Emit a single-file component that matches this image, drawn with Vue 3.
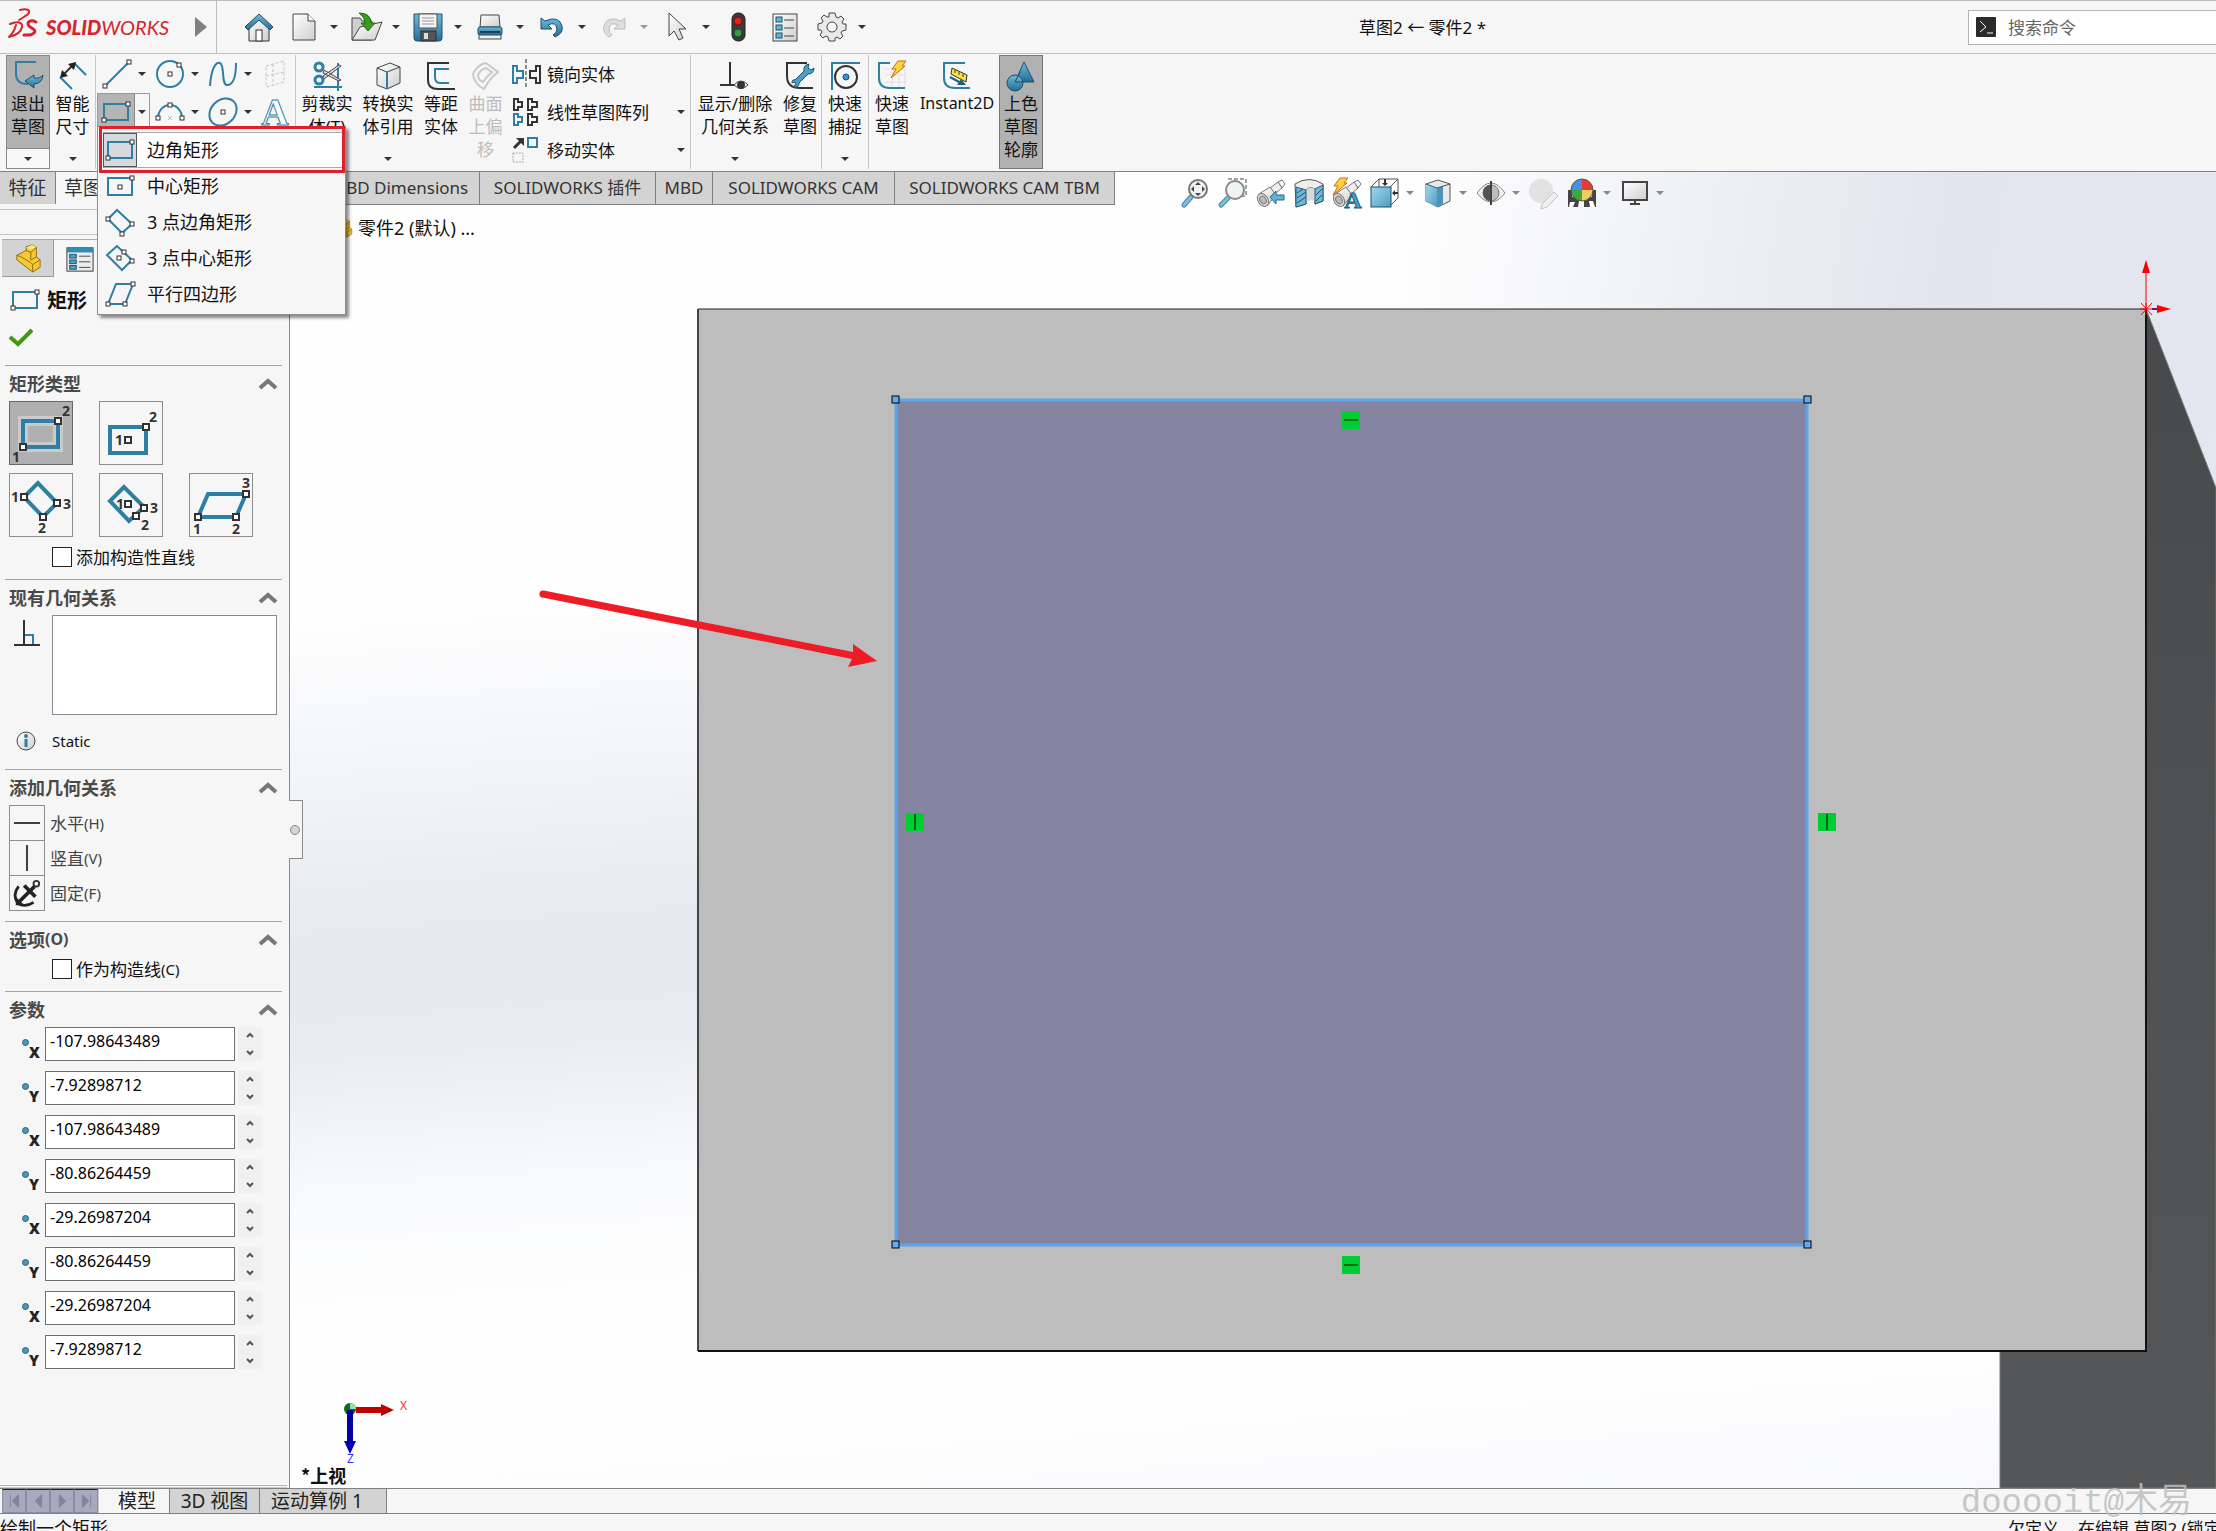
<script setup>
import { ref, reactive } from 'vue'

const sq = (x, y, s = 4) =>
  `<rect x="${x - s / 2}" y="${y - s / 2}" width="${s}" height="${s}" fill="#fff" stroke="#333" stroke-width="1"/>`
const sqBig = (x, y) =>
  `<rect x="${x - 3}" y="${y - 3}" width="6" height="6" fill="#fff" stroke="#333" stroke-width="2"/>`
const num = (n, x, y) =>
  `<text x="${x}" y="${y + 5}" text-anchor="middle" font-size="14" font-weight="700" fill="#333">${n}</text>`

const blue = 'stroke="#2f7ea3" stroke-width="2" fill="none"'
const dark = 'stroke="#333" stroke-width="2" fill="none"'
const flash = (x, y) =>
  `<path transform="translate(${x} ${y})" d="M8 0 L16 0 L12 5 L15 5 L1 17 L6 8 L2 8Z" fill="#ffd23c" stroke="#c46a14" stroke-width="1"/>`
const spyglass = `<g stroke="#777" stroke-width="1"><path d="M22 4 l4 -2 l3 4 l-3 4 z" fill="#f4f4f4"/><path d="M14 10 L22 4 L26 10 L19 16Z" fill="#eee"/><path d="M3 16 L14 9 L20 17 L11 28Z" fill="url(#g-grey)"/><ellipse cx="7" cy="22" rx="5" ry="7" transform="rotate(-32 7 22)" fill="#ddd"/><ellipse cx="7" cy="22" rx="3" ry="4" transform="rotate(-32 7 22)" fill="#bbb"/></g>`

const icons = {
  home: `<path d="M5 14 L15 5 L25 14 V29 H5Z" fill="url(#g-grey)" stroke="#333"/><rect x="12" y="18" width="6" height="11" fill="#fff" stroke="#333"/><path d="M15 2 L29 15 L26 18 L15 8 L4 18 L1 15Z" fill="url(#g-blue)" stroke="#1c4f6b"/>`,
  file: `<path d="M4 2 H19 L26 9 V28 H4Z" fill="url(#g-grey)" stroke="#444"/><path d="M19 2 V9 H26" fill="#fff" stroke="#444"/>`,
  open: `<path d="M1 28 V6 H9 L11 9 H21 V28Z" fill="#cfcfcf" stroke="#444"/><path d="M1 28 L9 15 L31 10 L24 28Z" fill="url(#g-grey)" stroke="#444"/><path d="M8 1 Q20 1 20 11 H24 L17 19 L10 11 H14 Q14 5 8 1Z" fill="#3c9a1c" stroke="#246b10"/>`,
  save: `<path d="M1 2 H29 V26 Q29 29 26 29 H4 Q1 29 1 26Z" fill="url(#g-blue)" stroke="#1c4f6b"/><rect x="6" y="2" width="18" height="14" fill="#f4f4f4" stroke="#555"/><path d="M9 6 H21 M9 9 H21 M9 12 H21" stroke="#999"/><rect x="8" y="19" width="15" height="10" fill="#555" stroke="#333"/><rect x="11" y="21" width="4" height="6" fill="#ddd"/>`,
  print: `<path d="M6 3 H24 L25 15 H5Z" fill="url(#g-grey)" stroke="#444"/><rect x="4" y="21" width="22" height="6" fill="#eee" stroke="#444"/><rect x="3" y="15" width="24" height="8" rx="2" fill="url(#g-blue)" stroke="#1c4f6b"/><path d="M5 20 H25" stroke="#173f56" stroke-width="2"/>`,
  undo: `<path d="M4 6 V17 H15 L11 13 Q19 9 20 17 Q20 21 16 23 L18 25 Q27 21 25 14 Q22 3 8 9Z" fill="url(#g-blue)" stroke="#1c4f6b"/>`,
  redo: `<path d="M26 6 V17 H15 L19 13 Q11 9 10 17 Q10 21 13 23 L10 25 Q3 20 5 14 Q8 3 22 9Z" fill="#ddd" stroke="#bdbdbd"/>`,
  cursor: `<path d="M8 1 V24 L13 19 L18 28 L22 26 L18 17 L25 17Z" fill="url(#g-grey)" stroke="#444"/>`,
  traffic: `<rect x="9" y="1" width="13" height="28" rx="6" fill="#3a3a3a" stroke="#222"/><circle cx="15" cy="9" r="4" fill="#e02020" stroke="#7a1010"/><circle cx="15" cy="21" r="4" fill="#35994a" stroke="#124f1e"/>`,
  list: `<rect x="3" y="2" width="24" height="27" fill="url(#g-grey)" stroke="#444" stroke-width="1"/><g fill="#62b3d6" stroke="#1c4f6b"><rect x="6" y="5" width="6" height="5"/><rect x="6" y="13" width="6" height="5"/><rect x="6" y="21" width="6" height="5"/></g><path d="M14 8 H24 M14 16 H24 M14 24 H24" stroke="#444"/>`,
  gear: `<path d="M12 1 H18 L19 5 L21 6 L24 4 L27 7 L25 10 L26 12 L29 12 V18 L25 19 L24 21 L26 24 L23 27 L20 25 L18 26 L18 29 H12 L11 25 L9 24 L6 26 L3 23 L5 20 L4 18 L1 18 V12 L5 11 L6 9 L4 6 L7 3 L10 5 L12 5Z" fill="#e9e9e9" stroke="#444" stroke-linejoin="round"/><circle cx="15" cy="15" r="5" fill="#f6f6f6" stroke="#444"/>`,
  exit: `<path d="M24 2 H4 V14 Q4 24 16 24" ${blue}/><path d="M31 15 Q30 24 22 24 V28 L13 21 L22 15 V18 Q28 19 31 15Z" fill="url(#g-blue)" stroke="#1c4f6b"/>`,
  dim: `<path d="M3 17 L15 29 M17 3 L29 15" ${blue}/><path d="M5 16 L17 4" ${dark}/><path d="M3 18 L5 10 L11 16Z M19 2 L11 4 L17 10Z" fill="#222"/>`,
  line: `<path d="M3 27 L27 3" ${blue}/>${sq(3, 27)}${sq(27, 3)}`,
  circle: `<circle cx="15" cy="15" r="13" ${blue}/>${sq(15, 15)}${sq(24, 6)}`,
  spline: `<path d="M2 27 C3 10 8 2 12 4 C17 6 13 26 19 26 C25 26 28 18 28 4" ${blue}/>`,
  plane: `<path d="M6 7 L24 2 V23 L6 28Z M6 17 L24 13 M13 5 V26" fill="none" stroke="#c4c4c4" stroke-width="1" stroke-dasharray="3 2"/>`,
  rect: `<rect x="3" y="7" width="24" height="16" ${blue}/>${sq(3, 23)}${sq(27, 7)}`,
  arc: `<path d="M3 21 A12 13 0 0 1 27 21" ${blue}/><path d="M13 19 L17 23 M17 19 L13 23" stroke="#bbb" fill="none"/>${sq(3, 21)}${sq(15, 8)}${sq(27, 21)}`,
  ellipse: `<ellipse cx="15" cy="15" rx="15" ry="12" transform="rotate(-45 15 15)" ${blue}/>${sq(15, 15)}`,
  letter: `<text x="15" y="28" text-anchor="middle" font-family="Liberation Serif, serif" font-weight="700" font-size="38" fill="#fff" stroke="#2f7ea3" stroke-width="1">A</text>`,
  trim: `<path d="M3 27 H31 M27 3 V31" ${blue}/><path d="M13 10 L30 20 L28 21 L12 13Z M13 19 L30 6 L28 5 L12 16Z" fill="#ddd" stroke="#444"/><circle cx="8" cy="7" r="4" fill="none" stroke="#2f7ea3" stroke-width="3"/><circle cx="8" cy="20" r="4" fill="none" stroke="#2f7ea3" stroke-width="3"/>`,
  cube: `<path d="M5 8 L18 3 L28 7 V23 L15 29 L5 25Z" fill="url(#g-grey)" stroke="#444"/><path d="M5 8 L15 12 L28 7" fill="none" stroke="#444"/><path d="M15 12 V29" stroke="#2f7ea3" stroke-width="2"/>`,
  offset: `<path d="M24 3 H3 V20 Q3 29 13 29 H30" ${dark}/><path d="M24 9 H10 V17 Q10 23 15 23 H24" ${blue}/>`,
  surface: `<path d="M3 14 Q8 4 16 3 L28 12 Q20 18 14 29 Q4 24 3 14Z M8 15 Q11 9 16 8 L22 12 Q17 16 13 22 Q8 20 8 15Z" fill="none" stroke="#c9c9c9" stroke-width="2"/>`,
  mirror: `<path d="M15 0 V30" stroke="#222" stroke-width="1" stroke-dasharray="4 2"/><path d="M2 7 H6 V12 H12 V19 H6 V24 H2Z" ${blue}/><path d="M29 7 H25 V12 H19 V19 H25 V24 H29Z" ${dark}/>`,
  pattern: `<path d="M3 2 H7 V5 H11 V10 H7 V13 H3Z M17 2 H21 V5 H26 V10 H21 V13 H17Z M17 17 H21 V20 H26 V25 H21 V28 H17Z" ${dark}/><path d="M3 17 H7 V20 H11 V25 H7 V28 H3Z" ${blue}/>`,
  move: `<path d="M3 13 L10 6" fill="none" stroke="#333" stroke-width="3"/><path d="M13 3 V11 L5 3Z" fill="#333"/><rect x="17" y="3" width="9" height="9" ${blue}/><rect x="2" y="18" width="10" height="9" fill="none" stroke="#aaa" stroke-width="1" stroke-dasharray="2 1"/>`,
  relation: `<path d="M11 2 V25 M1 25 H18" ${dark}/><path d="M15 25 Q22 17 29 25 Q22 32 15 25Z" fill="#fff" stroke="#444"/><circle cx="22" cy="25" r="4" fill="#333"/>`,
  repair: `<path d="M23 3 H3 V16 Q3 28 16 28 H29" ${dark}/><path d="M11 20 L20 11 Q19 5 25 4 L24 8 L27 10 L30 8 Q30 14 24 14 L15 23 Q15 28 10 27 L12 23 L10 22 L8 23Q8 19 11 20Z" fill="#4ca0c6" stroke="#1c4f6b"/>`,
  snap: `<path d="M31 3 H3 V30" ${blue}/><circle cx="17" cy="17" r="11" ${dark}/><circle cx="17" cy="17" r="3" fill="#3c8fd0" stroke="#1c4f6b"/>`,
  rapid: `<path d="M9 9 H29 V28 H9 M9 15 H29 M9 22 H29 M16 9 V28 M23 9 V28" fill="none" stroke="#dedede"/><path d="M14 3 H3 V18 Q3 28 14 28 H29" ${blue}/>${flash(14, 1)}`,
  instant: `<path d="M24 3 H3 V18 Q3 28 14 28 H29" ${blue}/><path d="M11 8 L26 15 L25 22 L10 14Z" fill="#ffe23c" stroke="#333"/><path d="M14 10 v3 M18 12 v3 M22 14 v3" stroke="#333"/><path d="M9 17 L20 23" stroke="#1f5f82" stroke-width="2"/><path d="M25 25 L16 25 L20 19Z" fill="#1f5f82"/>`,
  shaded: `<path d="M19 2 L29 22 H10Z" fill="url(#g-blue)" stroke="#1c4f6b"/><circle cx="10" cy="23" r="8" fill="url(#g-blue)" stroke="#1c4f6b"/><path d="M15 12 L10 22 H18" fill="none" stroke="#1c4f6b"/>`,
  rectCenter: `<rect x="3" y="7" width="24" height="17" ${blue}/>${sq(15, 16)}${sq(27, 7)}`,
  rect3: `<path d="M12 3 L3 12 L17 26 L27 17Z" ${blue}/>${sq(3, 12)}${sq(17, 27)}${sq(27, 17)}`,
  rect3c: `<path d="M12 3 L2 12 L17 27 L27 17Z" ${blue}/>${sq(14, 15)}${sq(19, 9)}${sq(27, 18)}`,
  para: `<path d="M3 25 L11 5 H28 L20 25Z" ${blue}/>${sq(3, 25)}${sq(20, 25)}${sq(28, 5)}`,
  part: `<path d="M3 12 L13 7 V3 L19 1 L24 3 V14 L28 17 V25 L20 30 L3 17Z" fill="#f6c934" stroke="#8a6a10"/><path d="M13 7 L18 9 L24 4 M18 9 V17 L24 14 M3 12 L8 14 L18 20 L20 22 L28 17 M20 22 V30" fill="none" stroke="#8a6a10"/><path d="M13 4 L19 1 L24 3 L18 6Z" fill="#ffe88a"/>`,
  props: `<rect x="1" y="3" width="28" height="25" fill="#ececec" stroke="#333"/><rect x="1" y="3" width="28" height="5" fill="#2f8cb8"/><g fill="#4ca0c6" stroke="#1c4f6b"><rect x="4" y="10" width="7" height="4"/><rect x="4" y="16" width="7" height="4"/><rect x="4" y="22" width="7" height="4"/></g><path d="M14 12 H26 M14 18 H26 M14 24 H26" stroke="#444"/>`,
  perp: `<path d="M12 3 V28 M2 28 H28" ${dark}/><path d="M13 18 H21 V27" ${blue}/>`,
  info: `<circle cx="15" cy="15" r="9" fill="url(#g-grey)" stroke="#444"/><path d="M15 13 V21" stroke="#2f7ea3" stroke-width="3"/><circle cx="15" cy="10" r="2" fill="#2f7ea3"/>`,
  horiz: `<path d="M1 15 H29" ${dark}/>`,
  vert: `<path d="M15 1 V29" ${dark}/>`,
  anchor: `<circle cx="25" cy="5" r="3" ${dark}/><path d="M23 8 L5 26 M12 7 L24 19" stroke="#222" stroke-width="4" fill="none"/><path d="M6 8 Q-1 17 5 26 Q13 31 22 25" stroke="#222" stroke-width="3" fill="none"/><path d="M3 19 V28 H12Z" fill="#222"/>`,
  zoomFit: `<path d="M4 27 L11 19" stroke="#3d7f9f" stroke-width="5" stroke-linecap="round"/><path d="M4 27 L11 19" stroke="#7fc0dd" stroke-width="3" stroke-linecap="round"/><circle cx="18" cy="11" r="9" fill="#f2f2f2" stroke="#777" stroke-width="2"/><path d="M18 4 l3 3 h-6z M18 18 l3 -3 h-6z M11 11 l3 -3 v6z M25 11 l-3 -3 v6z" fill="#444"/>`,
  zoomArea: `<path d="M10 1 H28 V18 H20" fill="none" stroke="#444" stroke-dasharray="4 2"/><path d="M3 27 L10 20" stroke="#3d7f9f" stroke-width="5" stroke-linecap="round"/><path d="M3 27 L10 20" stroke="#7fc0dd" stroke-width="3" stroke-linecap="round"/><circle cx="17" cy="12" r="9" fill="#eef3f3" stroke="#888" stroke-width="2"/>`,
  previous: `${spyglass}<path d="M14 19 L20 13 V17 H28 V22 H20 V26Z" fill="#5fb0d6" stroke="#2a6a88"/>`,
  section: `<path d="M1 6 Q15 -3 29 6 V23 L21 26 V11 Q15 8 12 12 V26 L2 29Z" fill="#eee" stroke="#555"/><path d="M12 12 Q15 8 21 11 V23 Q16 21 12 24Z" fill="#d8d8d8"/><path d="M2 9 L12 12 V26 L2 29Z M21 11 L29 7 V23 L21 26Z" fill="#6db9dc" stroke="#2a5a74"/><path d="M3 15 L9 11 M3 20 L12 14 M3 25 L12 19 M22 17 L28 11 M22 23 L28 17" stroke="#1c4f6b"/>`,
  dynamic: `${spyglass}${flash(0, 0)}<text x="21" y="30" text-anchor="middle" font-family="Liberation Serif, serif" font-weight="700" font-size="24" fill="#4c9fc6" stroke="#1f5f82" stroke-width="1">A</text>`,
  orient: `<path d="M1 9 L9 1 H28 V20 L20 28 M20 9 L28 1 M9 1 V9" fill="#fff" stroke="#555"/><rect x="1" y="9" width="20" height="20" fill="url(#g-sky)" stroke="#1c4f6b"/><path d="M15 1 V6 M28 15 H24" stroke="#333" stroke-width="2"/><path d="M12 5 H18 L15 8Z M25 12 V18 L22 15Z" fill="#333"/>`,
  display: `<path d="M3 6 L15 2 L27 6 V23 L15 29 L3 23Z" fill="#e6e9ee" stroke="#555"/><path d="M3 6 L14 10 V29 L3 23Z" fill="url(#g-sky)"/><path d="M14 10 L20 8 V26 L14 29Z" fill="#4c94b8"/><path d="M3 6 L14 10 L27 6" fill="none" stroke="#555"/>`,
  eye: `<path d="M1 15 Q15 -5 29 15 Q15 33 1 15Z" fill="#f1f1f1" stroke="#888"/><circle cx="15" cy="15" r="8" fill="#bdbdbd" stroke="#777"/><path d="M15 7 A8 8 0 0 0 15 23Z" fill="#555"/><path d="M15 3 V27" stroke="#444" stroke-width="2"/>`,
  appearance: `<circle cx="12" cy="13" r="12" fill="#e2e2e2"/><path d="M13 26 L25 14 L29 18 L18 29 L12 31Z" fill="#efefef" stroke="#c4c4c4"/>`,
  scene: `<rect x="1" y="12" width="28" height="17" fill="#444"/><path d="M5 15 h5 v4 h-5z M20 15 h5 v4 h-5z M3 24 l5 0 l-2 5 h-4z M12 23 h5 v6 h-6z M22 23 l4 0 l2 6 h-5z" fill="#fff"/><path d="M15 12 V1 A11 11 0 0 0 4 12Z" fill="#4a90e2"/><path d="M15 12 V1 A11 11 0 0 1 26 12Z" fill="#e23c34"/><path d="M15 12 H4 A11 11 0 0 0 15 23Z" fill="#3caa3c"/><path d="M15 12 H26 A11 11 0 0 1 15 23Z" fill="#f0cf60"/><circle cx="15" cy="12" r="11" fill="none" stroke="#555"/>`,
  monitor: `<rect x="3" y="4" width="24" height="18" fill="url(#g-grey)" stroke="#444" stroke-width="2"/><path d="M15 23 V26 M10 26 H20" stroke="#444" stroke-width="2"/>`,
  t1: `<rect x="13" y="19" width="35" height="26" fill="none" stroke="#d9dcde" stroke-width="10" opacity=".6"/><rect x="13" y="19" width="35" height="26" fill="none" stroke="#2f7ea3" stroke-width="4"/>${sqBig(48, 19)}${sqBig(13, 45)}${num(2, 56, 9)}${num(1, 6, 55)}`,
  t2: `<rect x="10" y="25" width="36" height="26" fill="none" stroke="#2f7ea3" stroke-width="4"/>${sqBig(46, 25)}${sqBig(28, 38)}${num(1, 19, 38)}${num(2, 53, 15)}`,
  t3: `<path d="M28 9 L14 23 L33 43 L47 29Z" fill="none" stroke="#2f7ea3" stroke-width="4"/>${sqBig(14, 23)}${sqBig(33, 43)}${sqBig(47, 29)}${num(1, 5, 23)}${num(3, 57, 30)}${num(2, 32, 54)}`,
  t4: `<path d="M24 13 L10 27 L29 47 L44 33Z" fill="none" stroke="#2f7ea3" stroke-width="4"/>${sqBig(44, 34)}${sqBig(36, 42)}${sqBig(28, 30)}${num(1, 20, 30)}${num(3, 54, 34)}${num(2, 45, 51)}`,
  t5: `<path d="M8 43 L18 20 H56 L46 43Z" fill="none" stroke="#2f7ea3" stroke-width="4"/>${sqBig(8, 43)}${sqBig(46, 43)}${sqBig(56, 20)}${num(1, 7, 55)}${num(2, 46, 55)}${num(3, 56, 9)}`,
}

const quick = [
  { icon: 'home', label: '主页' },
  { icon: 'file', label: '新建', drop: true },
  { icon: 'open', label: '打开', drop: true },
  { icon: 'save', label: '保存', drop: true },
  { icon: 'print', label: '打印', drop: true },
  { icon: 'undo', label: '撤消', drop: true },
  { icon: 'redo', label: '重做', drop: true, off: true },
  { icon: 'cursor', label: '选择', drop: true },
  { icon: 'traffic', label: '重建模型' },
  { icon: 'list', label: '文件属性' },
  { icon: 'gear', label: '选项', drop: true },
]

const sketchTools = [
  [{ icon: 'line', drop: true }, { icon: 'circle', drop: true }, { icon: 'spline', drop: true }, { icon: 'plane' }],
  [{ icon: 'rect', drop: true, on: true }, { icon: 'arc', drop: true }, { icon: 'ellipse', drop: true }, { icon: 'letter' }],
]

const groupA = [
  { icon: 'trim', lines: ['剪裁实', '体(T)'], cls: 'w62' },
  { icon: 'cube', lines: ['转换实', '体引用'], cls: 'w60', drop: true },
  { icon: 'offset', lines: ['等距', '实体'], cls: 'w46' },
  { icon: 'surface', lines: ['曲面', '上偏', '移'], cls: 'w43 off' },
]
const stack = [
  { icon: 'mirror', text: '镜向实体' },
  { icon: 'pattern', text: '线性草图阵列', drop: true },
  { icon: 'move', text: '移动实体', drop: true },
]
const groupB = [
  { icon: 'relation', lines: ['显示/删除', '几何关系'], cls: 'w88', drop: true },
  { icon: 'repair', lines: ['修复', '草图'], cls: 'w43 end' },
  { icon: 'snap', lines: ['快速', '捕捉'], cls: 'w47 end', drop: true },
  { icon: 'rapid', lines: ['快速', '草图'], cls: 'w46' },
  { icon: 'instant', lines: ['Instant2D'], cls: 'w84 latin' },
  { icon: 'shaded', lines: ['上色', '草图', '轮廓'], cls: 'w44 on' },
]

const menu = [
  { icon: 'rect', text: '边角矩形' },
  { icon: 'rectCenter', text: '中心矩形' },
  { icon: 'rect3', text: '3 点边角矩形' },
  { icon: 'rect3c', text: '3 点中心矩形' },
  { icon: 'para', text: '平行四边形' },
]

const tabs = [
  { text: '特征', width: 56, cjk: true },
  { text: '草图', width: 264, cjk: true, active: true },
  { text: 'MBD Dimensions', width: 160 },
  { text: 'SOLIDWORKS 插件', width: 176 },
  { text: 'MBD', width: 57 },
  { text: 'SOLIDWORKS CAM', width: 182 },
  { text: 'SOLIDWORKS CAM TBM', width: 220 },
]

const hud = [
  { icon: 'zoomFit' }, { icon: 'zoomArea' }, { icon: 'previous' }, { icon: 'section' }, { icon: 'dynamic' },
  { icon: 'orient', drop: true }, { icon: 'display', drop: true }, { icon: 'eye', drop: true },
  { icon: 'appearance' }, { icon: 'scene', drop: true }, { icon: 'monitor', drop: true },
]

const types = ['t1', 't2', 't3', 't4', 't5']
const type = ref('t1')
const relations = [
  { icon: 'horiz', text: '水平', key: '(H)' },
  { icon: 'vert', text: '竖直', key: '(V)' },
  { icon: 'anchor', text: '固定', key: '(F)' },
]
const params = reactive([
  { axis: 'X', value: '-107.98643489' },
  { axis: 'Y', value: '-7.92898712' },
  { axis: 'X', value: '-107.98643489' },
  { axis: 'Y', value: '-80.86264459' },
  { axis: 'X', value: '-29.26987204' },
  { axis: 'Y', value: '-80.86264459' },
  { axis: 'X', value: '-29.26987204' },
  { axis: 'Y', value: '-7.92898712' },
])
const step = (p, d) => { p.value = (parseFloat(p.value) + d).toFixed(8) }
const addLines = ref(false)
const asConstruction = ref(false)
const navArrows = ['M8 5 V19 M17 5 L10 12 L17 19Z', 'M16 5 L9 12 L16 19Z', 'M9 5 L16 12 L9 19Z', 'M8 5 L15 12 L8 19Z M17 5 V19']
const handles = [[896, 400], [1808, 400], [896, 1245], [1808, 1245]]
</script>

<template>
  <div class="app">
    <svg class="defs" aria-hidden="true">
      <defs>
        <linearGradient id="g-blue" x1="0" y1="0" x2="0" y2="1"><stop offset="0" stop-color="#6fbbdc" /><stop offset="1" stop-color="#256c93" /></linearGradient>
        <linearGradient id="g-sky" x1="0" y1="0" x2="1" y2="1"><stop offset="0" stop-color="#a5d8ee" /><stop offset="1" stop-color="#4d9cc0" /></linearGradient>
        <linearGradient id="g-grey" x1="0" y1="0" x2="1" y2="1"><stop offset="0" stop-color="#ffffff" /><stop offset="1" stop-color="#cfcfcf" /></linearGradient>
      </defs>
    </svg>

    <header class="titlebar">
      <div class="brand">
        <svg class="mark" viewBox="0 0 32 32" aria-hidden="true">
          <g fill="none" stroke="#d5252c" stroke-width="2" stroke-linecap="round" stroke-linejoin="round">
            <path d="M12 3 C18 1 24 3 20 7 C18 9 14 11 11 13" />
            <path d="M2 17 C9 14 15 15 14 20 C13 26 5 29 1 30 C4 27 7 22 8 18" />
            <path d="M28 15 C22 12 18 16 21 19 C24 22 29 23 26 26 C23 29 19 28 16 28" stroke-width="3" />
          </g>
        </svg>
        <span class="word"><b>SOLID</b>WORKS</span>
        <svg class="play" viewBox="0 0 12 20" aria-hidden="true"><path d="M0 0 L12 10 L0 20Z" fill="#808080" /></svg>
      </div>
      <nav class="quick">
        <template v-for="q in quick" :key="q.icon">
          <button class="icon-btn" :class="q.icon" :aria-label="q.label"><svg viewBox="0 0 30 30" v-html="icons[q.icon]"></svg></button>
          <button v-if="q.drop" class="caret" :class="{ dim: q.off }" :aria-label="q.label + '菜单'"></button>
        </template>
      </nav>
      <h1>草图2 ← 零件2 *</h1>
      <label class="search">
        <svg viewBox="0 0 20 20" aria-hidden="true"><rect width="20" height="20" rx="1" fill="#2b2b2b" /><path d="M4 4 L10 10 L4 15 M11 16 H17" fill="none" stroke="#fff" stroke-width="1" /></svg>
        <input type="text" placeholder="搜索命令" aria-label="搜索命令" />
      </label>
    </header>

    <section class="ribbon">
      <div class="tool w44 exit">
        <button class="face"><svg viewBox="0 0 32 32" v-html="icons.exit"></svg><span>退出</span><span>草图</span></button>
        <button class="foot" aria-label="退出草图菜单"><i class="tri"></i></button>
      </div>
      <div class="tool w46 dims">
        <button class="face"><svg viewBox="0 0 32 32" v-html="icons.dim"></svg><span>智能</span><span>尺寸</span></button>
        <button class="foot" aria-label="智能尺寸菜单"><i class="tri"></i></button>
      </div>

      <div class="grid">
        <div v-for="(row, i) in sketchTools" :key="i" class="grid-row">
          <div v-for="t in row" :key="t.icon" class="split" :class="{ on: t.on, solo: !t.drop }">
            <button class="split-icon" :aria-label="t.icon"><svg viewBox="0 0 30 30" v-html="icons[t.icon]"></svg></button>
            <button v-if="t.drop" class="split-drop" :aria-label="t.icon + ' menu'"><i class="tri"></i></button>
          </div>
        </div>
        <div class="menu" role="menu">
          <button v-for="(m, i) in menu" :key="m.text" class="menu-item" :class="{ current: i === 0 }" role="menuitem">
            <span class="menu-icon"><svg viewBox="0 0 30 30" v-html="icons[m.icon]"></svg></span>{{ m.text }}
          </button>
          <div class="highlight"></div>
        </div>
      </div>

      <div v-for="t in groupA" :key="t.icon" class="tool" :class="t.cls">
        <button class="face"><svg viewBox="0 0 32 32" v-html="icons[t.icon]"></svg><span v-for="l in t.lines" :key="l">{{ l }}</span></button>
        <button v-if="t.drop" class="foot" aria-label="菜单"><i class="tri"></i></button>
      </div>

      <div class="stack">
        <div v-for="s in stack" :key="s.icon" class="stack-row">
          <button class="stack-main"><svg viewBox="0 0 30 30" v-html="icons[s.icon]"></svg>{{ s.text }}</button>
          <button v-if="s.drop" class="stack-drop" :aria-label="s.text + '菜单'"><i class="tri"></i></button>
        </div>
      </div>

      <div v-for="t in groupB" :key="t.icon" class="tool" :class="t.cls">
        <button class="face"><svg viewBox="0 0 32 32" v-html="icons[t.icon]"></svg><span v-for="l in t.lines" :key="l">{{ l }}</span></button>
        <button v-if="t.drop" class="foot" aria-label="菜单"><i class="tri"></i></button>
      </div>
    </section>

    <main class="work">
      <svg class="scene" viewBox="0 172 2216 1316" preserveAspectRatio="xMinYMin slice" aria-hidden="true">
        <defs>
          <linearGradient id="side" x1="0" y1="0" x2="0" y2="1"><stop offset="0" stop-color="#47494b" /><stop offset=".5" stop-color="#505152" /><stop offset="1" stop-color="#555657" /></linearGradient>
        </defs>
        <path d="M2146 309 L2216 488 V1488 H2000 V1350 H2146Z" fill="url(#side)" stroke="#777" stroke-width="1" />
        <rect x="698" y="309" width="1448" height="1042" fill="#bdbdbd" />
        <path d="M698 309 V1351" stroke="#444" stroke-width="2" />
        <path d="M698 309 H2146" stroke="#222" stroke-width="1" />
        <path d="M698 1351 H2146 V309" fill="none" stroke="#111" stroke-width="2" />
        <rect x="896" y="400" width="911" height="845" fill="#8584a0" stroke="#5aa4f0" stroke-width="3" />
        <rect v-for="h in handles" :key="h.join()" :x="h[0] - 4" :y="h[1] - 4" width="7" height="7" fill="#64aaf2" stroke="#000" />
        <g fill="#00cc33">
          <rect x="1342" y="411" width="18" height="18" /><rect x="1342" y="1256" width="18" height="18" />
          <rect x="906" y="813" width="18" height="18" /><rect x="1818" y="813" width="18" height="18" />
        </g>
        <path d="M1344 420 H1358 M1344 1265 H1358 M915 814 V830 M1827 814 V830" stroke="#000" />
        <path d="M543 594 L855 656" stroke="#ee1c25" stroke-width="7" stroke-linecap="round" />
        <path d="M853 644 L877 661 L848 667 L853 657Z" fill="#ee1c25" />
        <path d="M2146 309 V272 M2141 303 L2152 315 M2152 303 L2141 315 M2140 309 H2153 M2146 303 V315" stroke="#f00" stroke-width="1" fill="none" />
        <path d="M2152 309 H2160" stroke="#70108a" stroke-width="2" />
        <path d="M2146 260 L2150 273 H2142Z M2157 305 L2171 309 L2157 313Z" fill="#f00" />
        <circle cx="350" cy="1409" r="6" fill="#0c6b20" /><path d="M350 1409 V1403 A6 6 0 0 1 356 1409Z" fill="#8ee8a0" />
        <rect x="356" y="1407" width="25" height="6" fill="#c00000" /><path d="M381 1404 L394 1410 L381 1416Z" fill="#c00000" />
        <rect x="347" y="1410" width="6" height="31" fill="#0000a0" /><path d="M344 1441 H356 L350 1454Z" fill="#0000b4" />
        <text x="400" y="1410" font-size="12" fill="#e33">X</text>
        <text x="347" y="1463" font-size="12" fill="#33e">Z</text>
      </svg>

      <div class="top-row">
        <div class="tabs" role="tablist">
          <button v-for="t in tabs" :key="t.text" role="tab" :class="{ active: t.active, cjk: t.cjk }" :style="{ width: t.width + 'px' }">{{ t.text }}</button>
        </div>
        <div class="hud">
          <template v-for="h in hud" :key="h.icon">
            <button class="icon-btn" :aria-label="h.icon"><svg viewBox="0 0 30 30" v-html="icons[h.icon]"></svg></button>
            <button v-if="h.drop" class="hud-drop" :aria-label="h.icon + ' menu'"><i class="tri grey"></i></button>
          </template>
        </div>
      </div>

      <div class="body-row">
        <aside class="panel">
          <div class="strip"></div>
          <div class="panel-tabs">
            <button class="sel" aria-label="特征树"><svg viewBox="0 0 30 30" v-html="icons.part"></svg></button>
            <button aria-label="属性"><svg viewBox="0 0 30 30" v-html="icons.props"></svg></button>
          </div>
          <h2 class="title"><svg viewBox="0 0 30 30" v-html="icons.rect"></svg>矩形</h2>
          <button class="ok" aria-label="确定"><svg viewBox="0 0 24 18"><path d="M1 8 L9 15 L23 1" fill="none" stroke="#3d9a10" stroke-width="4" /></svg></button>

          <section class="sec">
            <h3>矩形类型<svg class="chev" viewBox="0 0 18 12"><path d="M1 10 L9 3 L17 10" /></svg></h3>
            <div class="types">
              <button v-for="t in types" :key="t" :class="{ sel: t === type }" :aria-label="t" @click="type = t"><svg viewBox="0 0 62 62" v-html="icons[t]"></svg></button>
            </div>
            <label class="check lines"><input v-model="addLines" type="checkbox" />添加构造性直线</label>
          </section>

          <section class="sec">
            <h3>现有几何关系<svg class="chev" viewBox="0 0 18 12"><path d="M1 10 L9 3 L17 10" /></svg></h3>
            <div class="existing">
              <svg viewBox="0 0 30 30" v-html="icons.perp"></svg>
              <textarea aria-label="现有几何关系" readonly></textarea>
            </div>
            <p class="static"><svg viewBox="0 0 30 30" v-html="icons.info"></svg>Static</p>
          </section>

          <section class="sec">
            <h3>添加几何关系<svg class="chev" viewBox="0 0 18 12"><path d="M1 10 L9 3 L17 10" /></svg></h3>
            <div class="rels">
              <button v-for="r in relations" :key="r.icon" class="rel"><span class="rel-icon"><svg viewBox="0 0 30 30" v-html="icons[r.icon]"></svg></span>{{ r.text }}<small>{{ r.key }}</small></button>
            </div>
          </section>

          <section class="sec">
            <h3>选项<small>(O)</small><svg class="chev" viewBox="0 0 18 12"><path d="M1 10 L9 3 L17 10" /></svg></h3>
            <label class="check opt"><input v-model="asConstruction" type="checkbox" />作为构造线<small>(C)</small></label>
          </section>

          <section class="sec">
            <h3>参数<svg class="chev" viewBox="0 0 18 12"><path d="M1 10 L9 3 L17 10" /></svg></h3>
            <div class="params">
              <div v-for="(p, i) in params" :key="i" class="param">
                <label :for="'p' + i"><i class="dot"></i><b>{{ p.axis }}</b></label>
                <input :id="'p' + i" v-model="p.value" type="text" />
                <span class="spin">
                  <button aria-label="增加" @click="step(p, 1)"><svg viewBox="0 0 8 5"><path d="M1 4 L4 1 L7 4" /></svg></button>
                  <button aria-label="减少" @click="step(p, -1)"><svg viewBox="0 0 8 5"><path d="M1 1 L4 4 L7 1" /></svg></button>
                </span>
              </div>
            </div>
          </section>
          <div class="panel-end"></div>
          <button class="handle" aria-label="折叠面板"><i></i></button>
        </aside>

        <div class="viewport">
          <div class="tree"><svg viewBox="0 0 30 30" v-html="icons.part"></svg>零件2 (默认) ...</div>
          <div class="view-name">*上视</div>
        </div>
      </div>
    </main>

    <nav class="bottom">
      <div class="nav">
        <button v-for="(d, i) in navArrows" :key="i" :aria-label="'标签滚动 ' + (i + 1)"><svg viewBox="0 0 24 24"><path :d="d" fill="#83839c" stroke="#83839c" /></svg></button>
      </div>
      <button class="sheet w70 active">模型</button>
      <button class="sheet w90">3D 视图</button>
      <button class="sheet w127">运动算例 1</button>
    </nav>
    <footer class="status"><span class="hint">绘制一个矩形</span><span class="state"><span>欠定义</span><span>在编辑 草图2 (锁定的焦点)</span></span></footer>
    <div class="watermark">dooooit@木易</div>
  </div>
</template>

<style>
html, body { margin: 0; background: #f6f6f6; }
</style>

<style scoped>
* { box-sizing: border-box; }
.app {
  position: relative;
  display: flex;
  flex-direction: column;
  height: 100vh;
  overflow: hidden;
  background: #f6f6f6;
  color: #111;
  font-family: "Noto Sans", "Noto Sans CJK SC", sans-serif;
  font-size: 17px;
  line-height: 23px;
}
button { padding: 0; border: 0; background: none; font: inherit; color: inherit; }
h1, h2, h3, p { margin: 0; font-weight: 400; }
svg { display: block; flex: none; overflow: visible; }
.defs { position: absolute; width: 0; height: 0; }
.tri { display: block; width: 0; height: 0; border: 4px solid transparent; border-top-color: #333; border-bottom: 0; }
.tri.grey { border-top-color: #888; }

/* title bar */
.titlebar { display: flex; align-items: center; height: 54px; flex: none; border-top: 1px solid #bdbdbd; border-bottom: 1px solid #c0c0c0; }
.brand { display: flex; align-items: center; width: 217px; height: 52px; padding-left: 8px; border-right: 1px solid #bdbdbd; }
.mark { width: 32px; height: 32px; margin-bottom: 8px; }
.word { width: 149px; margin-left: 6px; color: #d5252c; font-family: Lato, sans-serif; font-size: 20px; font-style: italic; }
.word b { font-weight: 900; }
.play { width: 12px; height: 20px; }
.quick { display: flex; align-items: center; padding-left: 27px; }
.icon-btn { width: 30px; height: 30px; flex: none; }
.icon-btn svg { width: 30px; height: 30px; }
.file { margin-left: 15px; }
.list, .gear { margin-left: 17px; }
.caret { width: 14px; height: 14px; margin: 0 10px 0 8px; display: flex; align-items: center; justify-content: center; }
.caret::before { content: ""; border: 4px solid transparent; border-top-color: #333; border-bottom: 0; }
.caret.dim::before { border-top-color: #999; }
h1 { flex: 1; padding-left: 480px; font-size: 17px; white-space: nowrap; }
.search { display: flex; align-items: center; width: 248px; height: 35px; padding-left: 7px; border: 1px solid #b4b4b4; border-right: 0; background: #fff; }
.search svg { width: 20px; height: 20px; }
.search input { flex: 1; min-width: 0; margin-left: 12px; padding: 0; border: 0; outline: 0; background: none; font: inherit; }
.search input::placeholder { color: #666; opacity: 1; }

/* ribbon */
.ribbon { position: relative; z-index: 3; display: flex; height: 118px; flex: none; padding: 1px 0 2px 6px; border-bottom: 1px solid #808080; }
.tool { display: flex; flex-direction: column; flex: none; height: 114px; }
.face { flex: 1; display: flex; flex-direction: column; align-items: center; justify-content: flex-start; padding-top: 5px; white-space: nowrap; }
.face svg { width: 32px; height: 32px; }
.face span { display: block; height: 23px; }
.foot { display: flex; align-items: center; justify-content: center; height: 20px; }
.exit { border: 1px solid #888; }
.exit .face { background: #b1b1b1; padding-top: 4px; }
.exit .foot { background: #f8f8f8; border-top: 1px solid #888; }
.dims, .grid, .end, .stack { border-right: 1px solid #c6c6c6; }
.on.tool { background: #b1b1b1; border: 1px solid #777; }
.on.tool .face { padding-top: 4px; }
.off { color: #bcbcbc; }
.latin { font-size: 16px; }
.w43 { width: 43px; } .w44 { width: 44px; } .w46 { width: 46px; } .w47 { width: 47px; }
.w60 { width: 60px; } .w62 { width: 62px; } .w84 { width: 84px; } .w88 { width: 88px; }
.grid { position: relative; width: 200px; flex: none; padding-left: 1px; }
.grid-row { display: flex; height: 38px; }
.split { display: flex; width: 53px; border: 1px solid transparent; }
.split.solo { width: 38px; }
.split-icon { flex: 1; display: flex; align-items: center; justify-content: center; }
.split-icon svg { width: 30px; height: 30px; }
.split-drop { width: 14px; display: flex; align-items: center; justify-content: center; }
.split.on { border-color: #999; }
.split.on .split-icon { background: #b4b4b4; border-right: 1px solid #888; }
.stack { width: 184px; padding-left: 4px; flex: none; }
.stack-row { display: flex; align-items: center; height: 38px; justify-content: space-between; }
.stack-main { display: flex; align-items: center; gap: 6px; }
.stack-main svg { width: 30px; height: 30px; }
.stack-drop { padding-right: 5px; }

.menu { position: absolute; top: 71px; left: 1px; width: 249px; padding: 5px 2px 2px 5px; background: #f6f6f6; border: 1px solid #8e8e8e; box-shadow: 3px 3px 3px rgba(0, 0, 0, .45); }
.menu-item { display: flex; align-items: center; width: 100%; height: 36px; font-size: 18px; }
.menu-icon { display: flex; align-items: center; justify-content: center; width: 34px; height: 34px; margin-right: 10px; }
.menu-icon svg { width: 30px; height: 30px; }
.current { background: #fff; border-top: 1px solid #aaa; border-bottom: 1px solid #aaa; }
.current .menu-icon { background: #d6d9dd; border: 1px solid #555; }
.highlight { position: absolute; top: -1px; left: 1px; right: 0; height: 47px; border: 3px solid #e01f2b; pointer-events: none; }

/* work area */
.work {
  position: relative;
  flex: 1;
  min-height: 0;
  display: flex;
  flex-direction: column;
  overflow: hidden;
  background:
    linear-gradient(98deg, rgba(226, 229, 238, 0) 62%, #e2e5ee 86%, #e4e7f0 100%) top / 100% 400px no-repeat,
    linear-gradient(176deg, #fefefe 0%, #fefefe 32%, #f1f3f7 44%, #e6e9f0 54%, #e7eaf1 60%, #fafbfd 72%, #fefefe 80%, #fefefe 90%, #f7f8fc 100%);
}
.scene { position: absolute; inset: 0; width: 100%; height: 100%; }
.top-row { position: relative; display: flex; align-items: flex-start; height: 32px; flex: none; }
.tabs { display: flex; flex: none; height: 33px; background: #f6f6f6; }
.tabs button { height: 33px; border-right: 1px solid #808080; border-bottom: 1px solid #808080; background: #d3d3d3; color: #333; font-size: 17px; line-height: 32px; white-space: nowrap; }
.tabs .cjk { font-size: 19px; }
.tabs .active { background: #f6f6f6; border-bottom-color: #f6f6f6; padding-left: 8px; text-align: left; }
.hud { display: flex; align-items: center; height: 42px; margin-left: 65px; gap: 8px; }
.hud-drop { display: flex; justify-content: center; width: 12px; margin: 0 -1px 0 -4px; }
.body-row { position: relative; display: flex; flex: 1; min-height: 0; }

/* property panel */
.panel { position: relative; display: flex; flex-direction: column; width: 290px; flex: none; padding-top: 5px; background: #f6f6f6; border-right: 1px solid #8a8a8a; }
.strip { height: 26px; flex: none; border-top: 1px solid #c4c4c4; border-bottom: 1px solid #c4c4c4; }
.panel-tabs { display: flex; height: 42px; flex: none; padding: 4px 0 0 2px; }
.panel-tabs button { display: flex; align-items: center; justify-content: center; width: 52px; border-top: 1px solid #aaa; }
.panel-tabs .sel { background: #d3d3d3; border-right: 1px solid #999; border-bottom: 1px solid #999; }
.panel-tabs svg { width: 28px; height: 28px; }
.title { display: flex; align-items: center; gap: 7px; height: 45px; flex: none; padding-left: 10px; font-size: 20px; font-weight: 700; font-family: "Noto Sans CJK SC", sans-serif; }
.title svg { width: 30px; height: 30px; }
.ok { width: 24px; height: 18px; margin: 7px 0 18px 9px; flex: none; }
.ok svg { width: 24px; height: 18px; }
.sec { margin: 0 7px 0 5px; padding: 0 5px 0 4px; border-top: 1px solid #a6a6a6; flex: none; }
h3 { display: flex; align-items: center; height: 35px; color: #4a4a4a; font-size: 18px; font-weight: 700; font-family: "Noto Sans CJK SC", sans-serif; }
h3 small { font-family: "Noto Sans", sans-serif; font-size: 16px; font-weight: 700; }
.chev { width: 18px; height: 12px; margin-left: auto; }
.chev path { fill: none; stroke: #777; stroke-width: 4px; }
.types { display: grid; grid-template-columns: repeat(3, 64px); column-gap: 26px; row-gap: 8px; }
.types button { height: 64px; border: 1px solid #8e8e8e; }
.types button:nth-child(3) { grid-column: 1; }
.types .sel { background: #b0b0b0; border-color: #666; }
.types svg { width: 62px; height: 62px; }
.check { display: flex; align-items: center; height: 20px; margin-left: 43px; }
.check input { appearance: none; width: 20px; height: 20px; margin: 0 4px 0 0; border: 1px solid #222; background: #fff; }
.check input:checked { background: #2f7ea3; }
.check small, .rel small { font-size: 15px; }
.lines { margin-top: 10px; margin-bottom: 12px; }
.opt { margin-top: 2px; margin-bottom: 12px; }
.existing { display: flex; gap: 10px; padding-left: 3px; }
.existing svg { width: 30px; height: 30px; margin-top: 2px; }
.existing textarea { width: 226px; height: 100px; resize: none; border: 1px solid #868994; background: #fff; outline: 0; }
.static { display: flex; align-items: center; gap: 11px; height: 26px; margin: 13px 0 15px; padding-left: 2px; font-size: 15px; }
.static svg { width: 30px; height: 30px; }
.rels { display: flex; flex-direction: column; margin-bottom: 10px; }
.rel { display: flex; align-items: center; color: #444; }
.rel + .rel { margin-top: -1px; }
.rel-icon { display: flex; align-items: center; justify-content: center; width: 36px; height: 36px; margin-right: 5px; border: 1px solid #8e8e8e; }
.rel svg { width: 28px; height: 28px; }
.params { display: flex; flex-direction: column; gap: 10px; }
.param { display: flex; height: 34px; padding-left: 12px; }
.param label { position: relative; width: 24px; }
.param .dot { position: absolute; left: 1px; top: 12px; width: 7px; height: 7px; border-radius: 50%; background: #4796bb; border: 1px solid #2b6280; }
.param b { position: absolute; left: 8px; top: 14px; font-size: 15px; font-weight: 900; line-height: 23px; color: #222; }
.param input { width: 190px; padding: 0 4px 6px; border: 1px solid #6e6e6e; background: #fff; font: inherit; font-size: 16px; outline: 0; }
.spin { display: flex; flex-direction: column; width: 24px; margin-left: 3px; background: #f0f0f0; border-radius: 3px; }
.spin button { flex: 1; display: flex; align-items: center; justify-content: center; }
.spin svg { width: 8px; height: 5px; }
.spin path { fill: none; stroke: #555; stroke-width: 2px; }
.panel-end { margin: auto 2px 0 0; height: 3px; border-top: 1px solid #b4b4b4; border-bottom: 1px solid #ccc; }
.handle { position: absolute; left: 289px; top: 596px; width: 14px; height: 59px; background: #f6f6f6; border: 1px solid #8a8a8a; border-left: 0; }
.handle i { display: block; width: 10px; height: 10px; margin-left: 1px; border-radius: 50%; border: 1px solid #888; background: #d4d4d4; }
.viewport { position: relative; flex: 1; display: flex; flex-direction: column; justify-content: space-between; padding: 11px 0 0 11px; }
.tree { display: flex; align-items: center; gap: 5px; height: 26px; padding-left: 34px; font-size: 18px; white-space: nowrap; }
.tree svg { width: 18px; height: 20px; }
.view-name { height: 24px; font-size: 18px; font-weight: 700; font-family: "Noto Sans CJK SC", sans-serif; }

/* bottom bars */
.bottom { display: flex; height: 26px; flex: none; border-top: 1px solid #808080; border-bottom: 1px solid #808080; }
.nav { display: flex; width: 99px; padding-left: 2px; border-right: 1px solid #ccc; }
.nav button { width: 24px; height: 24px; background: #a9a9bd; border: 1px solid #8c8ca4; border-top-color: #222; }
.nav svg { width: 22px; height: 22px; }
.sheet { height: 24px; border-right: 1px solid #808080; background: #d3d3d3; font-size: 19px; line-height: 22px; white-space: nowrap; color: #222; }
.sheet.active { background: #f6f6f6; padding-left: 6px; }
.w70 { width: 71px; } .w90 { width: 90px; } .w127 { width: 127px; padding-right: 12px; }
.status { display: flex; justify-content: space-between; height: 17px; flex: none; padding-top: 3px; overflow: hidden; white-space: nowrap; }
.hint { font-size: 18px; }
.state { display: flex; gap: 19px; width: 208px; flex: none; }
.watermark { position: absolute; right: 24px; bottom: 8px; font-family: "Liberation Mono", "Noto Sans CJK SC", monospace; font-size: 34px; line-height: 40px; color: rgba(190, 190, 190, .85); pointer-events: none; }
</style>
